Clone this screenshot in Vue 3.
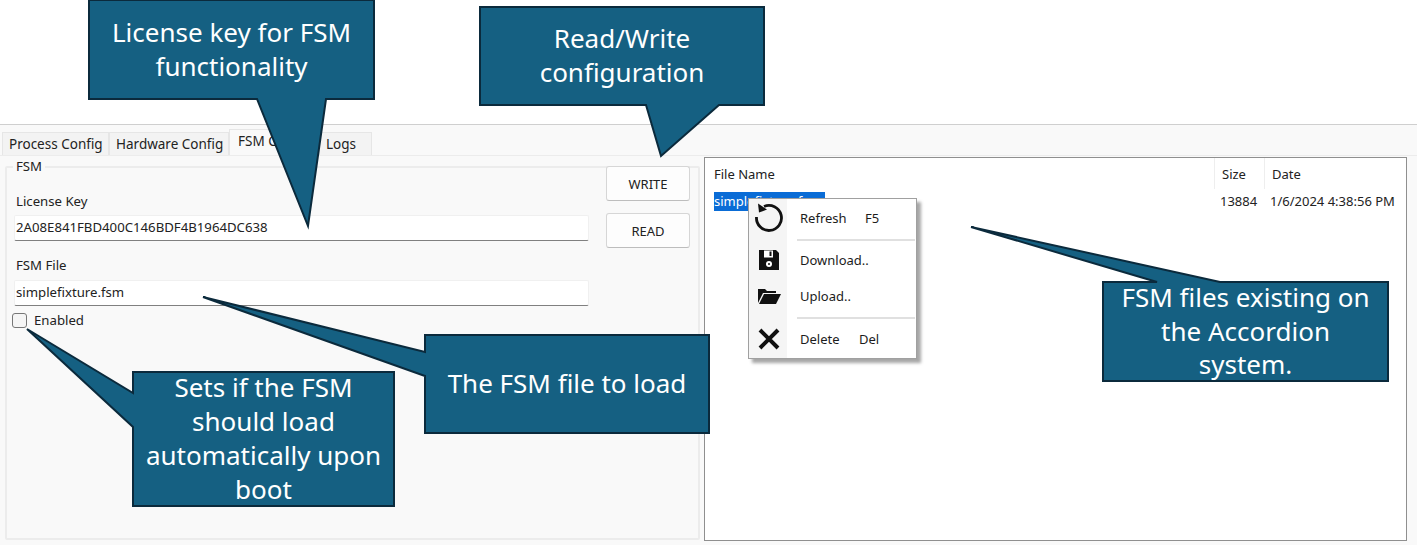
<script setup>
const tabs = [
  { label: 'Process Config' },
  { label: 'Hardware Config' },
  { label: 'FSM Config', active: true },
  { label: 'Logs' }
]
const callouts = [
  { cls: 'c1', lines: ['License key for FSM', 'functionality'] },
  { cls: 'c2', lines: ['Read/Write', 'configuration'] },
  { cls: 'c3', lines: ['The FSM file to load'] },
  { cls: 'c4', lines: ['Sets if the FSM', 'should load', 'automatically upon', 'boot'] },
  { cls: 'c5', lines: ['FSM files existing on', 'the Accordion', 'system.'] }
]
const shapes = [
  '89,0 374,0 374,99 326,99 308,226 257,99 89,99',
  '480,7 764,7 764,105 719,105 661,156 646,105 480,105',
  '425,335 709,335 709,433 425,433 425,376 203,297 425,352',
  '133,372 394,372 394,506 133,506 133,427 27,329 133,393',
  '1103,282 1157,282 971,227 1220,282 1388,282 1388,381 1103,381'
]
</script>

<template>
  <div class="page">
    <div class="window">
      <div class="tabs">
        <div v-for="t in tabs" :key="t.label" class="tab" :class="{ active: t.active }">{{ t.label }}</div>
      </div>
      <div class="body">
        <div class="left">
          <fieldset class="group">
            <legend>FSM</legend>
            <label class="lbl first">License Key</label>
            <div class="input">2A08E841FBD400C146BDF4B1964DC638</div>
            <label class="lbl second">FSM File</label>
            <div class="input">simplefixture.fsm</div>
            <div class="check"><span class="box"></span><span>Enabled</span></div>
          </fieldset>
          <div class="buttons">
            <div class="btn">WRITE</div>
            <div class="btn">READ</div>
          </div>
        </div>
        <div class="list">
          <div class="head">
            <div class="col name">File Name</div>
            <div class="col size">Size</div>
            <div class="col date">Date</div>
          </div>
          <div class="row">
            <div class="name"><span class="sel">simplefixture.fsm</span></div>
            <div class="size">13884</div>
            <div class="date">1/6/2024 4:38:56 PM</div>
          </div>
        </div>
      </div>
    </div>

    <div class="menu">
      <div class="item">
        <span class="ico"><svg width="32" height="32" viewBox="0 0 32 32"><path d="M3.500 15 A12.500 12.500 0 1 0 11 4.500" fill="none" stroke="#111" stroke-width="2.800"/><path d="M5 1.500 L6 10.500 L14 7.500 Z" fill="#111"/></svg></span>
        <span class="mtext">Refresh</span><span class="key">F5</span>
      </div>
      <div class="sep"></div>
      <div class="item">
        <span class="ico"><svg width="22" height="22" viewBox="0 0 22 22"><path d="M1 1H18L21 4V21H1Z" fill="#111"/><rect x="6" y="1.500" width="9" height="7" fill="#fff"/><rect x="11.500" y="2.500" width="2" height="4.500" fill="#111"/><circle cx="11" cy="15" r="3" fill="#fff"/><circle cx="11" cy="15" r="1" fill="#111"/></svg></span>
        <span class="mtext">Download..</span>
      </div>
      <div class="item">
        <span class="ico"><svg width="24" height="18" viewBox="0 0 24 18"><path d="M1 16V2H8L10 4H19V6H6L1 16Z" fill="#111"/><path d="M2 17L7 7H24L19 17Z" fill="#111"/></svg></span>
        <span class="mtext">Upload..</span>
      </div>
      <div class="sep sep2"></div>
      <div class="item">
        <span class="ico"><svg width="22" height="22" viewBox="0 0 22 22"><path d="M2 2L20 20M20 2L2 20" stroke="#111" stroke-width="4" fill="none"/></svg></span>
        <span class="mtext">Delete</span><span class="key del">Del</span>
      </div>
    </div>

    <svg class="tails" width="1417" height="545" viewBox="0 0 1417 545">
      <polygon v-for="(p, i) in shapes" :key="i" :points="p" fill="#156082" stroke="#0b2a3c" stroke-width="2" stroke-linejoin="miter"/>
    </svg>
    <div v-for="c in callouts" :key="c.cls" class="callout" :class="c.cls">
      <div v-for="l in c.lines" :key="l">{{ l }}</div>
    </div>
  </div>
</template>

<style>
html, body { margin: 0; background: #fff; }
</style>

<style scoped>
.page { position: relative; width: 1417px; height: 545px; overflow: hidden; background: #fff; font-family: "Noto Sans", "Open Sans", sans-serif; font-size: 13.2px; color: #222; }
.window { position: absolute; left: 0; top: 124px; width: 1417px; height: 421px; box-sizing: border-box; background: #f9f9f9; border-top: 1px solid #cfcfcf; display: flex; flex-direction: column; }
.tabs { display: flex; padding: 0 0 0 2px; height: 31px; box-sizing: border-box; border-bottom: 1px solid #ececec; align-items: flex-end; font-size: 13.5px; }
.tab { height: 23px; line-height: 22px; padding: 0 7px 0 6px; background: #f3f3f3; border: 1px solid #e6e6e6; border-bottom: 0; box-sizing: border-box; white-space: nowrap; }
.tab:nth-child(1) { width: 107px; }
.tab:nth-child(2) { width: 120px; }
.tab.active { width: 90px; height: 26px; padding-left: 8px; background: #f9f9f9; line-height: 22px; }
.tab:last-child { width: 53px; }
.body { flex: 1; display: flex; position: relative; }
.left { width: 704px; display: flex; flex-shrink: 0; position: relative; padding: 2px 0 0 5px; box-sizing: border-box; }
.group { width: 695px; box-sizing: border-box; margin: 0; border: 2px solid #ececec; padding: 0 0 0 7px; border-radius: 2px; height: 382px; min-inline-size: 0; }
.group legend { padding: 0 3px 2px; margin-left: -1px; line-height: 16px; }
.lbl { display: block; line-height: 18px; margin-left: 2px; }
.input { width: 575px; height: 26px; box-sizing: border-box; background: #fff; border: 1px solid #f0f0f0; border-bottom: 1px solid #808080; line-height: 22px; padding-left: 1px; border-radius: 2px; }
.lbl.first { margin-top: 16px; margin-bottom: 5px; }
.lbl.second { margin-top: 15px; margin-bottom: 6px; }
.input + .lbl + .input { line-height: 23px; }
.check { display: flex; align-items: center; gap: 7px; margin-top: 5px; margin-left: -2px; line-height: 18px; }
.box { width: 13px; height: 13px; border: 1px solid #777; border-radius: 3px; background: #f5f5f5; display: block; }
.buttons { position: absolute; left: 606px; top: 10px; display: flex; flex-direction: column; gap: 12px; font-size: 13px; }
.btn { width: 84px; height: 35px; box-sizing: border-box; background: #fdfdfd; border: 1px solid #d6d6d6; border-bottom-color: #bdbdbd; border-radius: 3px; display: flex; align-items: center; justify-content: center; }
.list { width: 703px; height: 384px; margin-top: 1px; box-sizing: border-box; background: #fff; border: 1px solid #8f8f8f; font-size: 13px; }
.head { display: flex; height: 31px; align-items: center; }
.col { height: 100%; line-height: 33px; border-right: 1px solid #eee; box-sizing: border-box; }
.name { width: 510px; padding-left: 9px; box-sizing: border-box; }
.size { width: 50px; box-sizing: border-box; padding-left: 7px; }
.date { padding-left: 7px; flex: 1; box-sizing: border-box; white-space: nowrap; }
.col.date { border-right: 0; }
.row { display: flex; line-height: 19px; margin-top: 3px; }
.row .size { padding-left: 5px; }
.row .date { padding-left: 5px; }
.sel { background: #0a6cd6; color: #fff; display: inline-block; width: 111px; }
.menu { position: absolute; left: 748px; top: 198px; width: 169px; height: 161px; box-sizing: border-box; background: linear-gradient(to right, #f5f5f5 38px, #fff 38px); border: 1px solid #a0a0a0; box-shadow: 4px 4px 3px rgba(0,0,0,.35); padding: 1px; font-size: 13px; color: #1c1c1c; }
.item { display: flex; align-items: center; height: 36px; }
.sep { height: 2px; background: #e0e0e0; margin: 3px 0 1px 47px; }
.sep2 { margin-bottom: 2px; }
.ico { width: 37px; margin-right: 13px; height: 100%; display: flex; align-items: center; justify-content: center; }
.mtext { width: 65px; }
.key { margin-left: 0; }
.key.del { margin-left: -6px; }
.callout { position: absolute; color: #fff; font-size: 26px; line-height: 34px; text-align: center; white-space: nowrap; }
.c1 { left: 89px; width: 285px; top: 16px; margin-top: -1px; }
.c2 { left: 480px; width: 284px; top: 21px; }
.c3 { left: 425px; width: 284px; top: 366px; }
.c4 { left: 133px; width: 261px; top: 370px; }
.c5 { left: 1103px; width: 285px; top: 281px; line-height: 33.500px; }
.tails { position: absolute; left: 0; top: 0; pointer-events: none; }
</style>
